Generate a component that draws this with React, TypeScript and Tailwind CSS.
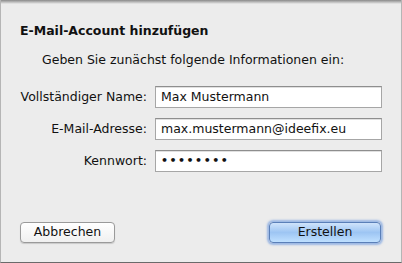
const fields = [
  { label: "Vollständiger Name:", value: "Max Mustermann", type: "text" },
  { label: "E-Mail-Adresse:", value: "max.mustermann@ideefix.eu", type: "text" },
  { label: "Kennwort:", value: "••••••••", type: "password" },
];

export default function App() {
  return (
    <div className="w-[402px] h-[263px] overflow-hidden bg-[#ececec] font-['DejaVu_Sans',sans-serif] text-[13px] text-[#111] relative border-l border-r border-b border-l-[#b5b5b5] border-r-[#b5b5b5] border-b-[#6a6a6a]">
      {/* window top shadow */}
      <div className="absolute top-0 left-0 right-0 h-[4px] bg-gradient-to-b from-[#8a8a8a] to-[#ececec]" />
      <div className="pt-[22px] px-[19px]">
        <h1 className="font-bold text-[12.5px] leading-[18px]">E-Mail-Account hinzufügen</h1>
        <p className="mt-[11px] pl-[22px] text-[12.5px] leading-[18px]">
          Geben Sie zunächst folgende Informationen ein:
        </p>
        <div className="mt-[17px] flex flex-col gap-[10px]">
          {fields.map((f) => (
            <div key={f.label} className="flex items-center">
              <label className="w-[135px] shrink-0 whitespace-nowrap text-right pr-[8px] text-[12.5px]">{f.label}</label>
              <div className="w-[227px] h-[22px] bg-white border border-[#a6a6a6] border-t-[#8e8e8e] flex items-center px-[5px] text-[12.5px] shadow-[inset_0_1px_0_#e0e0e0]">
                {f.type === "password" ? (
                  <span className="tracking-[1.5px] text-[11px] font-bold">{f.value}</span>
                ) : (
                  f.value
                )}
              </div>
            </div>
          ))}
        </div>
        <div className="mt-[50px] flex justify-between items-center">
          <button className="w-[95px] h-[21px] rounded-[4px] border border-[#9a9a9a] bg-gradient-to-b from-white to-[#f0f0f0] text-[12.5px] leading-none shadow-[0_1px_1px_rgba(0,0,0,0.15)]">
            Abbrechen
          </button>
          <button className="mr-[1px] w-[112px] h-[21px] rounded-[4px] border border-[#5a7fb8] bg-gradient-to-b from-[#cfe3fb] via-[#9dc5f3] to-[#bfe0ff] text-[12.5px] leading-none shadow-[0_0_2px_2px_rgba(90,140,220,0.55)]">
            Erstellen
          </button>
        </div>
      </div>
    </div>
  );
}
